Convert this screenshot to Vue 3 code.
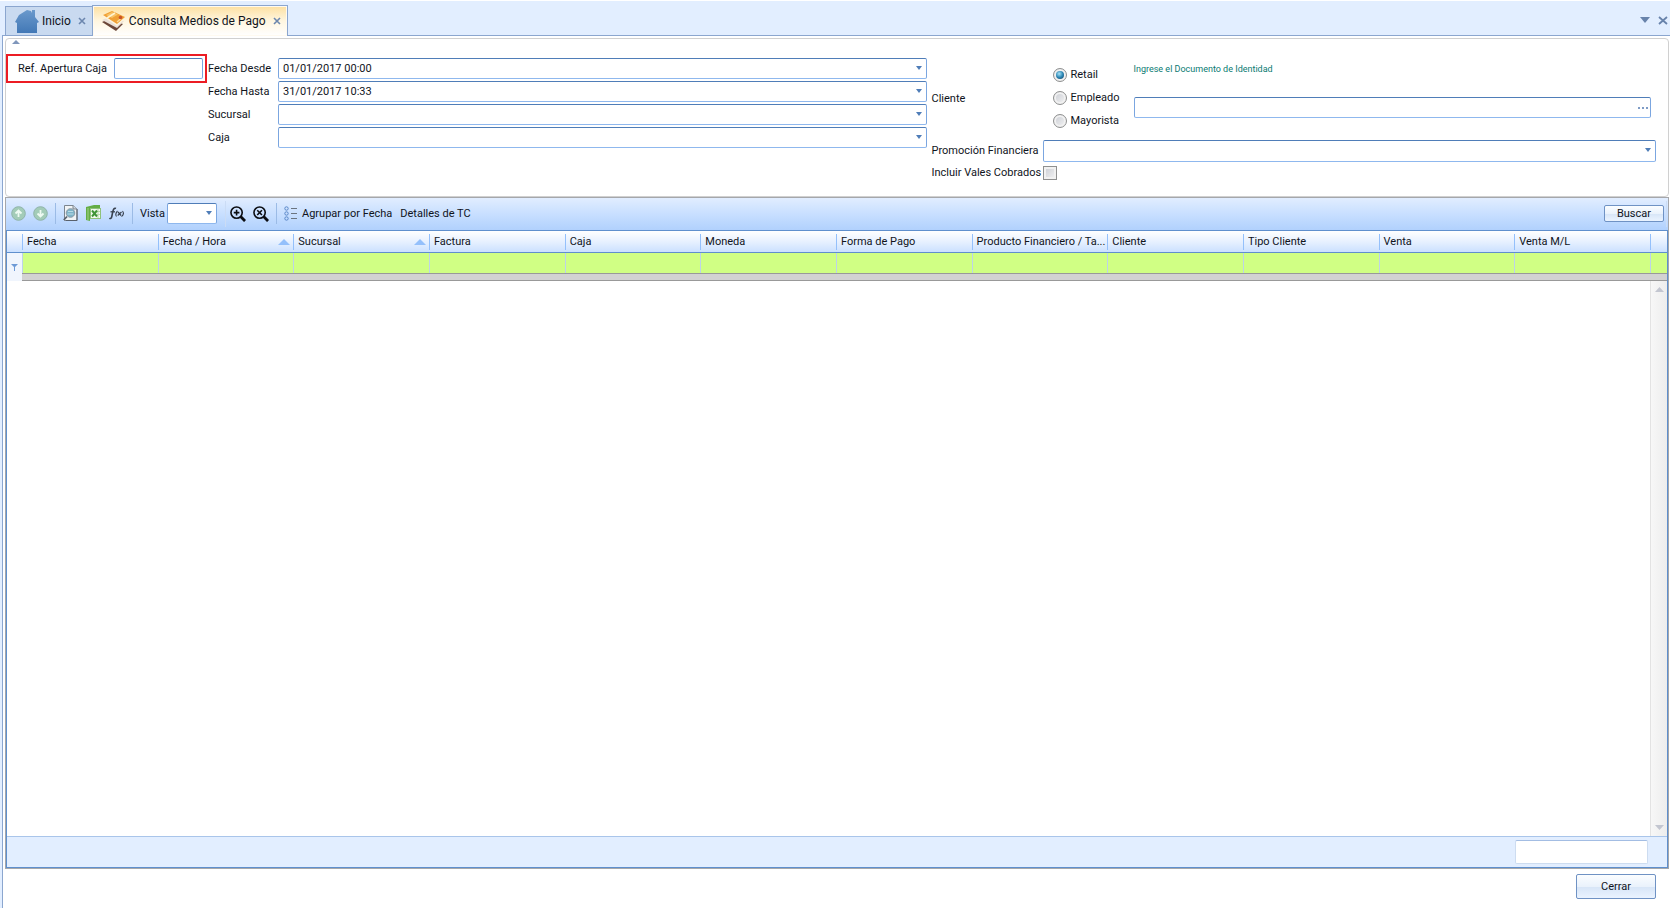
<script setup>
import { ref } from 'vue'

const reference = ref('')
const dateFrom = ref('01/01/2017 00:00')
const dateTo = ref('31/01/2017 10:33')
const clientType = ref('Retail')
const clientTypes = ['Retail', 'Empleado', 'Mayorista']
const document = ref('')
const includeVouchers = ref(false)

const columns = [
  { title: 'Fecha' },
  { title: 'Fecha / Hora', sorted: true },
  { title: 'Sucursal', sorted: true },
  { title: 'Factura' },
  { title: 'Caja' },
  { title: 'Moneda' },
  { title: 'Forma de Pago' },
  { title: 'Producto Financiero / Ta...' },
  { title: 'Cliente' },
  { title: 'Tipo Cliente' },
  { title: 'Venta' },
  { title: 'Venta M/L' },
]
</script>

<template>
  <div class="app">
    <header class="tabbar">
      <nav class="tabs">
        <div class="tab home">
          <svg class="tab-icon" width="26" height="25" viewBox="0 0 26 25" aria-hidden="true">
            <defs>
              <linearGradient id="roof" x1="0" y1="0" x2="0" y2="1">
                <stop offset="0" stop-color="#6a99cc" />
                <stop offset="1" stop-color="#4278b6" />
              </linearGradient>
            </defs>
            <path d="M1 13 L5 6 L13 1 L17 2 L18 4 V1 H21 V8 L25 13 L23 14 V24 H3 V14 Z" fill="url(#roof)" />
          </svg>
          <button type="button" class="tab-name">Inicio</button>
          <button type="button" class="tab-close" aria-label="Cerrar Inicio">
            <svg width="8" height="8" viewBox="0 0 8 8"><path d="M1 1 L7 7 M7 1 L1 7" stroke="#6c87ae" stroke-width="1.6" /></svg>
          </button>
        </div>
        <div class="tab active">
          <svg class="tab-icon" width="26" height="20" viewBox="0 0 26 20" aria-hidden="true">
            <path d="M1 11 L8 8 L22 13 L15 20 Z" fill="#6b4638" />
            <path d="M1 9 L8 6 L23 10 L16 17 Z" fill="#e9dfd6" />
            <path d="M1 5 L8 3 L24 8 L16 15 Z" fill="#fdf3dd" />
            <path d="M2 4 L11 0 L24 6 L16 13 Z" fill="#f0a035" />
            <path d="M5 4 L11 1 L17 3.500 L11 7 Z" fill="#f8c266" />
            <path d="M6 7 L14 2" stroke="#fff3cf" stroke-width="1.600" />
            <path d="M16 11 L20 7.500" stroke="#fbdc9a" stroke-width="1.400" />
            <circle cx="19.500" cy="6.500" r="1.800" fill="#c9542a" />
          </svg>
          <button type="button" class="tab-name">Consulta Medios de Pago</button>
          <button type="button" class="tab-close" aria-label="Cerrar Consulta Medios de Pago">
            <svg width="8" height="8" viewBox="0 0 8 8"><path d="M1 1 L7 7 M7 1 L1 7" stroke="#6c87ae" stroke-width="1.6" /></svg>
          </button>
        </div>
      </nav>
      <div class="window-actions">
        <button type="button" aria-label="Lista de pestañas">
          <svg width="10" height="6" viewBox="0 0 10 6"><path d="M0 0 H10 L5 6 Z" fill="#6883ab" /></svg>
        </button>
        <button type="button" aria-label="Cerrar pestaña">
          <svg width="10" height="9" viewBox="0 0 10 9"><path d="M1 1 L9 8 M9 1 L1 8" stroke="#6883ab" stroke-width="1.8" /></svg>
        </button>
      </div>
    </header>

    <main class="body">
      <section class="filters">
        <button type="button" class="collapse" aria-label="Contraer filtros">
          <svg width="8" height="4" viewBox="0 0 8 4"><path d="M4 0 L8 4 H0 Z" fill="#7f96bb" /></svg>
        </button>
        <div class="filter-columns">
          <div class="reference">
            <label for="ref">Ref. Apertura Caja</label>
            <input id="ref" v-model="reference" class="field" type="text" />
          </div>

          <div class="dates">
            <label for="from">Fecha Desde</label>
            <div class="combo">
              <input id="from" v-model="dateFrom" class="field" type="text" />
              <svg class="arrow" width="6" height="4" viewBox="0 0 6 4"><path d="M0 0 H6 L3 4 Z" fill="#4f7db8" /></svg>
            </div>
            <label for="to">Fecha Hasta</label>
            <div class="combo">
              <input id="to" v-model="dateTo" class="field" type="text" />
              <svg class="arrow" width="6" height="4" viewBox="0 0 6 4"><path d="M0 0 H6 L3 4 Z" fill="#4f7db8" /></svg>
            </div>
            <label for="branch">Sucursal</label>
            <div class="combo">
              <select id="branch" class="field"><option></option></select>
              <svg class="arrow" width="6" height="4" viewBox="0 0 6 4"><path d="M0 0 H6 L3 4 Z" fill="#4f7db8" /></svg>
            </div>
            <label for="till">Caja</label>
            <div class="combo">
              <select id="till" class="field"><option></option></select>
              <svg class="arrow" width="6" height="4" viewBox="0 0 6 4"><path d="M0 0 H6 L3 4 Z" fill="#4f7db8" /></svg>
            </div>
          </div>

          <div class="client-side">
            <div class="client">
              <span id="client-label" class="client-label">Cliente</span>
              <div class="radios" role="radiogroup" aria-labelledby="client-label">
                <label v-for="type in clientTypes" :key="type">
                  <input v-model="clientType" type="radio" name="client" :value="type" />
                  {{ type }}
                </label>
              </div>
              <div class="document">
                <label for="doc">Ingrese el Documento de Identidad</label>
                <div class="combo">
                  <input id="doc" v-model="document" class="field" type="text" />
                  <button type="button" class="more" aria-label="Buscar cliente">
                    <svg width="10" height="2" viewBox="0 0 10 2"><path d="M0 0h2v2H0z M4 0h2v2H4z M8 0h2v2H8z" fill="#7f9cc6" /></svg>
                  </button>
                </div>
              </div>
            </div>
            <div class="promo">
              <label for="promo">Promoción Financiera</label>
              <div class="combo">
                <select id="promo" class="field tall"><option></option></select>
                <svg class="arrow" width="6" height="4" viewBox="0 0 6 4"><path d="M0 0 H6 L3 4 Z" fill="#4f7db8" /></svg>
              </div>
            </div>
            <div class="vouchers">
              <label for="vouchers">Incluir Vales Cobrados</label>
              <input id="vouchers" v-model="includeVouchers" type="checkbox" />
            </div>
          </div>
        </div>
      </section>

      <section class="results">
        <div class="toolbar">
          <button type="button" class="tool" aria-label="Subir">
            <svg width="15" height="15" viewBox="0 0 15 15">
              <circle cx="7.5" cy="7.5" r="6.8" fill="#a3ccb8" stroke="#8fb3a9" />
              <path d="M7.500 11 V5 M4.500 7.500 L7.500 4.500 L10.500 7.500" fill="none" stroke="#eefaf2" stroke-width="1.800" />
            </svg>
          </button>
          <button type="button" class="tool" aria-label="Bajar">
            <svg width="15" height="15" viewBox="0 0 15 15">
              <circle cx="7.5" cy="7.5" r="6.8" fill="#a3ccb8" stroke="#8fb3a9" />
              <path d="M7.500 4 V10 M4.500 7.500 L7.500 10.500 L10.500 7.500" fill="none" stroke="#eefaf2" stroke-width="1.800" />
            </svg>
          </button>
          <span class="divider"></span>
          <button type="button" class="tool" aria-label="Vista previa">
            <svg width="16" height="17" viewBox="0 0 16 17">
              <path d="M1.500 .5 H10 L14 4 V15.500 H1.500 Z" fill="#f1f4f6" stroke="#7c858f" />
              <path d="M14 4 V15.500 H3" fill="none" stroke="#59616c" />
              <path d="M10 .5 V4 H14" fill="#cfd6dd" stroke="#7c858f" />
              <circle cx="7.500" cy="8" r="4.300" fill="#7eb4c9" stroke="#8c9aa6" />
              <path d="M5 6.500 H10 M4.500 9 H10.500" stroke="#b9dbe6" />
              <path d="M4 11.500 L.8 15" stroke="#59616c" stroke-width="1.800" />
            </svg>
          </button>
          <button type="button" class="tool" aria-label="Exportar a Excel">
            <svg width="16" height="17" viewBox="0 0 16 17">
              <path d="M0 2 L8 0 H14 V3 H4 V16 L0 15 Z" fill="#64ad45" />
              <path d="M2 3 V15" stroke="#a3d08c" />
              <rect x="4.500" y="3.500" width="10" height="10" fill="#f4faef" stroke="#8fc27a" />
              <path d="M12 4 V13 M11 6.500 H14 M11 9.500 H14" stroke="#b7d9a8" />
              <path d="M6 5.500 L11 11.500 M11 5.500 L6 11.500" stroke="#3f9436" stroke-width="2" />
            </svg>
          </button>
          <button type="button" class="tool" aria-label="Fórmula">
            <svg width="16" height="13" viewBox="0 0 16 13" fill="none" stroke="#38414f">
              <path d="M7 1.500 C5 .5 4.300 2.500 3.700 5 L2.800 9.500 C2.400 11.500 1.300 12 .5 11" stroke-width="1.600" />
              <path d="M1.500 4.800 H6" stroke-width="1.300" />
              <path d="M8.500 4 C6.500 6 6.500 8 7.500 9.500 M13.500 4 C15 6 14.500 8 12.500 9.500" stroke-width="1.100" />
              <path d="M9 5 L12 8.500 M12.500 5 L8.700 8.500" stroke-width="1.200" />
            </svg>
          </button>
          <span class="divider"></span>
          <label for="view" class="view-label">Vista</label>
          <div class="combo view">
            <select id="view" class="field"><option></option></select>
            <svg class="arrow" width="6" height="4" viewBox="0 0 6 4"><path d="M0 0 H6 L3 4 Z" fill="#4f7db8" /></svg>
          </div>
          <span class="divider pale"></span>
          <button type="button" class="tool" aria-label="Acercar">
            <svg width="16" height="16" viewBox="0 0 17 17" fill="none" stroke="#0b0d12">
              <circle cx="7" cy="7" r="6" stroke-width="1.700" />
              <path d="M4 7 H10 M7 4 V10" stroke-width="1.700" />
              <path d="M11 11 L16 16" stroke-width="3" />
            </svg>
          </button>
          <button type="button" class="tool" aria-label="Quitar zoom">
            <svg width="16" height="16" viewBox="0 0 17 17" fill="none" stroke="#0b0d12">
              <circle cx="7" cy="7" r="6" stroke-width="1.700" />
              <path d="M4.500 4.500 L9.500 9.500 M9.500 4.500 L4.500 9.500" stroke-width="1.700" />
              <path d="M11 11 L16 16" stroke-width="3" />
            </svg>
          </button>
          <span class="divider"></span>
          <button type="button" class="text-tool">
            <svg width="14" height="15" viewBox="0 0 14 15" fill="none">
              <g stroke="#5b88c8">
                <circle cx="2.500" cy="2.500" r="1.700" />
                <circle cx="2.500" cy="7.500" r="1.700" />
                <circle cx="2.500" cy="12.500" r="1.700" />
              </g>
              <path d="M7 2.500 H13 M7 7.500 H13 M7 12.500 H13" stroke="#6b7480" />
            </svg>
            Agrupar por Fecha
          </button>
          <button type="button" class="text-tool">Detalles de TC</button>
          <button type="button" class="push search">Buscar</button>
          <span class="divider pale end"></span>
        </div>

        <div class="grid">
          <table>
            <colgroup>
              <col class="lead" />
              <col v-for="column in columns" :key="column.title" />
              <col class="trail" />
            </colgroup>
            <thead>
              <tr>
                <td></td>
                <th v-for="column in columns" :key="column.title" scope="col">
                  <div class="head">
                    <span>{{ column.title }}</span>
                    <svg v-if="column.sorted" width="12" height="6" viewBox="0 0 12 6"><path d="M6 0 L12 6 H0 Z" fill="#94c0fb" /></svg>
                  </div>
                </th>
                <td><div class="head"></div></td>
              </tr>
            </thead>
            <tbody>
              <tr>
                <td class="funnel">
                  <svg width="7" height="7" viewBox="0 0 7 7"><path d="M0 0 H7 L4 3 V7 H3 V3 Z" fill="#6d9ad6" /></svg>
                </td>
                <td v-for="column in columns" :key="column.title" class="filter-cell">
                  <input type="text" :aria-label="'Filtrar ' + column.title" />
                </td>
                <td class="filter-cell"></td>
              </tr>
            </tbody>
          </table>
          <div class="splitter"></div>
          <div class="rows">
            <div class="scrollbar">
              <svg width="9" height="5" viewBox="0 0 9 5"><path d="M4.500 0 L9 5 H0 Z" fill="#c3c6d0" /></svg>
              <svg width="9" height="5" viewBox="0 0 9 5"><path d="M0 0 H9 L4.500 5 Z" fill="#c3c6d0" /></svg>
            </div>
          </div>
          <div class="summary">
            <input type="text" aria-label="Total Venta M/L" readonly />
          </div>
        </div>
      </section>

      <footer class="actions">
        <button type="button" class="push close">Cerrar</button>
      </footer>
    </main>
  </div>
</template>

<style>
body {
  margin: 0;
}
</style>

<style scoped>
* {
  box-sizing: border-box;
}

.app {
  display: flex;
  flex-direction: column;
  height: 100vh;
  padding-left: 2px;
  border-top: 1px solid #fff;
  background: #e2eeff;
  color: #10141c;
  font-family: Roboto, "Open Sans", sans-serif;
  font-size: 11px;
  line-height: 16px;
}

svg {
  display: block;
  flex: none;
}

button,
input,
select {
  margin: 0;
  color: inherit;
  font: inherit;
}

button {
  padding: 0;
  border: 0;
  background: none;
}

/* Tab strip */
.tabbar {
  display: flex;
  justify-content: space-between;
  height: 34px;
  padding: 4px 2px 0 3px;
}

.tabs {
  display: flex;
  align-items: flex-end;
  font-size: 12px;
}

.tab {
  display: flex;
  align-items: center;
  height: 29px;
  border: 1px solid #8ba6cf;
  border-bottom: 0;
  white-space: nowrap;
}

.home {
  padding: 0 6px 0 8px;
  border-right: 0;
  background: #c9daf0;
}

.tab-icon {
  margin-right: 2px;
}

.active {
  z-index: 1;
  height: 31px;
  margin-bottom: -1px;
  padding: 0 6px 0 8px;
  background: linear-gradient(#fde0a0, #fff6e0 50%, #fff);
  box-shadow: inset 0 0 0 1px #fffaf0;
}

.tab-close {
  margin-left: 7px;
}

.window-actions {
  display: flex;
  align-items: center;
  gap: 8px;
}

/* Page body */
.body {
  display: flex;
  flex: 1;
  flex-direction: column;
  min-height: 0;
  padding: 2px 1px 0 2px;
  border-top: 1px solid #8ba6cf;
  border-left: 1px solid #8ba6cf;
  background: #fff;
}

.filters {
  height: 159px;
  border: 1px solid #d0d0d0;
  border-radius: 4px;
}

.collapse {
  display: block;
  margin: 1px 0 0 6px;
  height: 4px;
}

.filter-columns {
  display: grid;
  grid-template-columns: 201px minmax(0, 72fr) minmax(0, 73fr);
  align-items: start;
  padding: 10px 12px 0 0;
}

.reference {
  display: flex;
  align-items: center;
  justify-content: space-between;
  height: 29px;
  padding: 0 2px 0 10px;
  border: 2px solid #ec1c24;
}

.reference .field {
  width: 89px;
}

.field {
  width: 100%;
  height: 21px;
  padding: 0 4px;
  border: 1px solid #7ba6e0;
  border-top-color: #4f7db8;
  border-bottom-color: #8fb8ee;
  border-radius: 2px;
  outline: 0;
  background: #fff;
  appearance: none;
}

.tall {
  height: 22px;
}

.combo {
  display: grid;
  align-items: center;
}

.combo > * {
  grid-area: 1 / 1;
}

.arrow,
.more {
  justify-self: end;
  margin: 0 5px 2px 0;
  pointer-events: none;
}

.more {
  margin: 0 3px 0 0;
}

.dates {
  display: grid;
  grid-template-columns: 70px minmax(0, 1fr);
  align-items: center;
  row-gap: 2px;
  padding: 4px 0 0 1px;
}

.client-side {
  padding: 0 0 0 5px;
}

.client {
  display: grid;
  grid-template-columns: 121px 81px minmax(0, 1fr);
  align-items: center;
  padding: 9px 5px 0 0;
}

.client-label {
  padding-top: 2px;
}

.radios label {
  display: flex;
  align-items: center;
  gap: 4px;
  height: 23px;
}

.radios input {
  display: grid;
  place-items: center;
  width: 14px;
  height: 14px;
  border: 1px solid #8e8f8f;
  border-radius: 50%;
  background: linear-gradient(135deg, #c9ccd3, #f4f4f4);
  box-shadow: inset 0 0 0 2px #f1f1f1;
  appearance: none;
}

.radios input:checked::before {
  width: 8px;
  height: 8px;
  border-radius: 50%;
  background: radial-gradient(circle at 40% 35%, #a9e4f8, #2d87b5 50%, #123a5c);
  content: "";
}

.document {
  align-self: start;
}

.document label {
  display: block;
  height: 34px;
  color: #0a7a72;
  font-size: 9px;
  line-height: 12px;
}

.promo {
  display: grid;
  grid-template-columns: 111px minmax(0, 1fr);
  align-items: center;
  padding-top: 8px;
  white-space: nowrap;
}

.vouchers {
  display: grid;
  grid-template-columns: 111px 14px;
  align-items: center;
  padding-top: 3px;
  white-space: nowrap;
}

.vouchers input {
  width: 14px;
  height: 14px;
  border: 1px solid #8e8f8f;
  background: linear-gradient(135deg, #c9ccd3, #f4f4f4);
  box-shadow: inset 0 0 0 2px #f1f1f1;
  appearance: none;
}

/* Results */
.results {
  display: flex;
  flex: 1;
  flex-direction: column;
  min-height: 0;
  border: 1px solid #a5a7ab;
}

.toolbar {
  display: flex;
  align-items: center;
  height: 32px;
  padding: 0 1px 1px 5px;
  background: linear-gradient(#e1edff, #c8dfff 50%, #b1d1fd);
}

.tool {
  margin-right: 7px;
}

.divider {
  width: 1px;
  height: 21px;
  margin-right: 7px;
  background: #9bbbe6;
}

.pale {
  height: 26px;
  margin-right: 4px;
  background: #cbdcf5;
}

.view-label {
  width: 27px;
}

.view {
  width: 50px;
  margin-right: 8px;
}

.text-tool {
  display: flex;
  align-items: center;
  gap: 4px;
  margin-right: 8px;
}

.push {
  border: 1px solid #6f92c4;
  border-radius: 2px;
  background: linear-gradient(#fbfdff, #eaf2fc 50%, #d7e5f7 52%, #eaf3ff);
}

.search {
  width: 60px;
  height: 17px;
  margin: 0 2px 0 auto;
  line-height: 15px;
}

.end {
  margin: 0;
}

.grid {
  display: flex;
  flex: 1;
  flex-direction: column;
  min-height: 0;
  border: 1px solid #5f8fcd;
}

table {
  width: 100%;
  table-layout: fixed;
  border-spacing: 0;
}

.lead {
  width: 15px;
}

.trail {
  width: 17px;
}

th,
td {
  padding: 0;
  font-weight: 400;
  text-align: left;
}

thead tr {
  background: linear-gradient(#fff, #e6f0ff 50%, #c8dfff);
}

thead th,
thead td {
  height: 22px;
  border-bottom: 1px solid #5f8fcd;
}

.head {
  display: flex;
  align-items: center;
  justify-content: space-between;
  height: 16px;
  padding: 0 3px 0 4px;
  border-left: 1px solid #94c0fb;
}

.head span {
  white-space: nowrap;
}

.funnel {
  background: #f0f5fd;
}

.funnel svg {
  margin: 8px auto 0 4px;
}

.filter-cell {
  height: 20px;
  border-left: 1px solid #bdd3e8;
  background: #d0ff84;
}

.filter-cell input {
  display: block;
  width: 100%;
  height: 20px;
  padding: 0 4px;
  border: 0;
  outline: 0;
  background: none;
}

.splitter {
  flex: none;
  height: 8px;
  margin-left: 15px;
  border-top: 1px solid #999;
  border-bottom: 1px solid #999;
  background: #d2d2d2;
  box-shadow: -15px 0 #f0f5fd;
}

.rows {
  display: flex;
  flex: 1;
  justify-content: flex-end;
}

.scrollbar {
  display: flex;
  flex-direction: column;
  align-items: center;
  justify-content: space-between;
  width: 17px;
  padding: 6px 0;
  border-left: 1px solid #e3e3e3;
  background: linear-gradient(90deg, #f7f7f7, #ededed);
}

.summary {
  display: flex;
  flex: none;
  justify-content: flex-end;
  height: 31px;
  padding: 3px 19px 0 0;
  border-top: 1px solid #a9c5ea;
  background: #e2eeff;
}

.summary input {
  width: 133px;
  height: 24px;
  border: 1px solid #cddcf0;
  border-top-color: #a3bde3;
  border-radius: 2px;
  background: #fff;
}

.actions {
  display: flex;
  flex: none;
  justify-content: flex-end;
  height: 39px;
  padding: 5px 13px 0 0;
}

.close {
  width: 80px;
  height: 25px;
}
</style>
